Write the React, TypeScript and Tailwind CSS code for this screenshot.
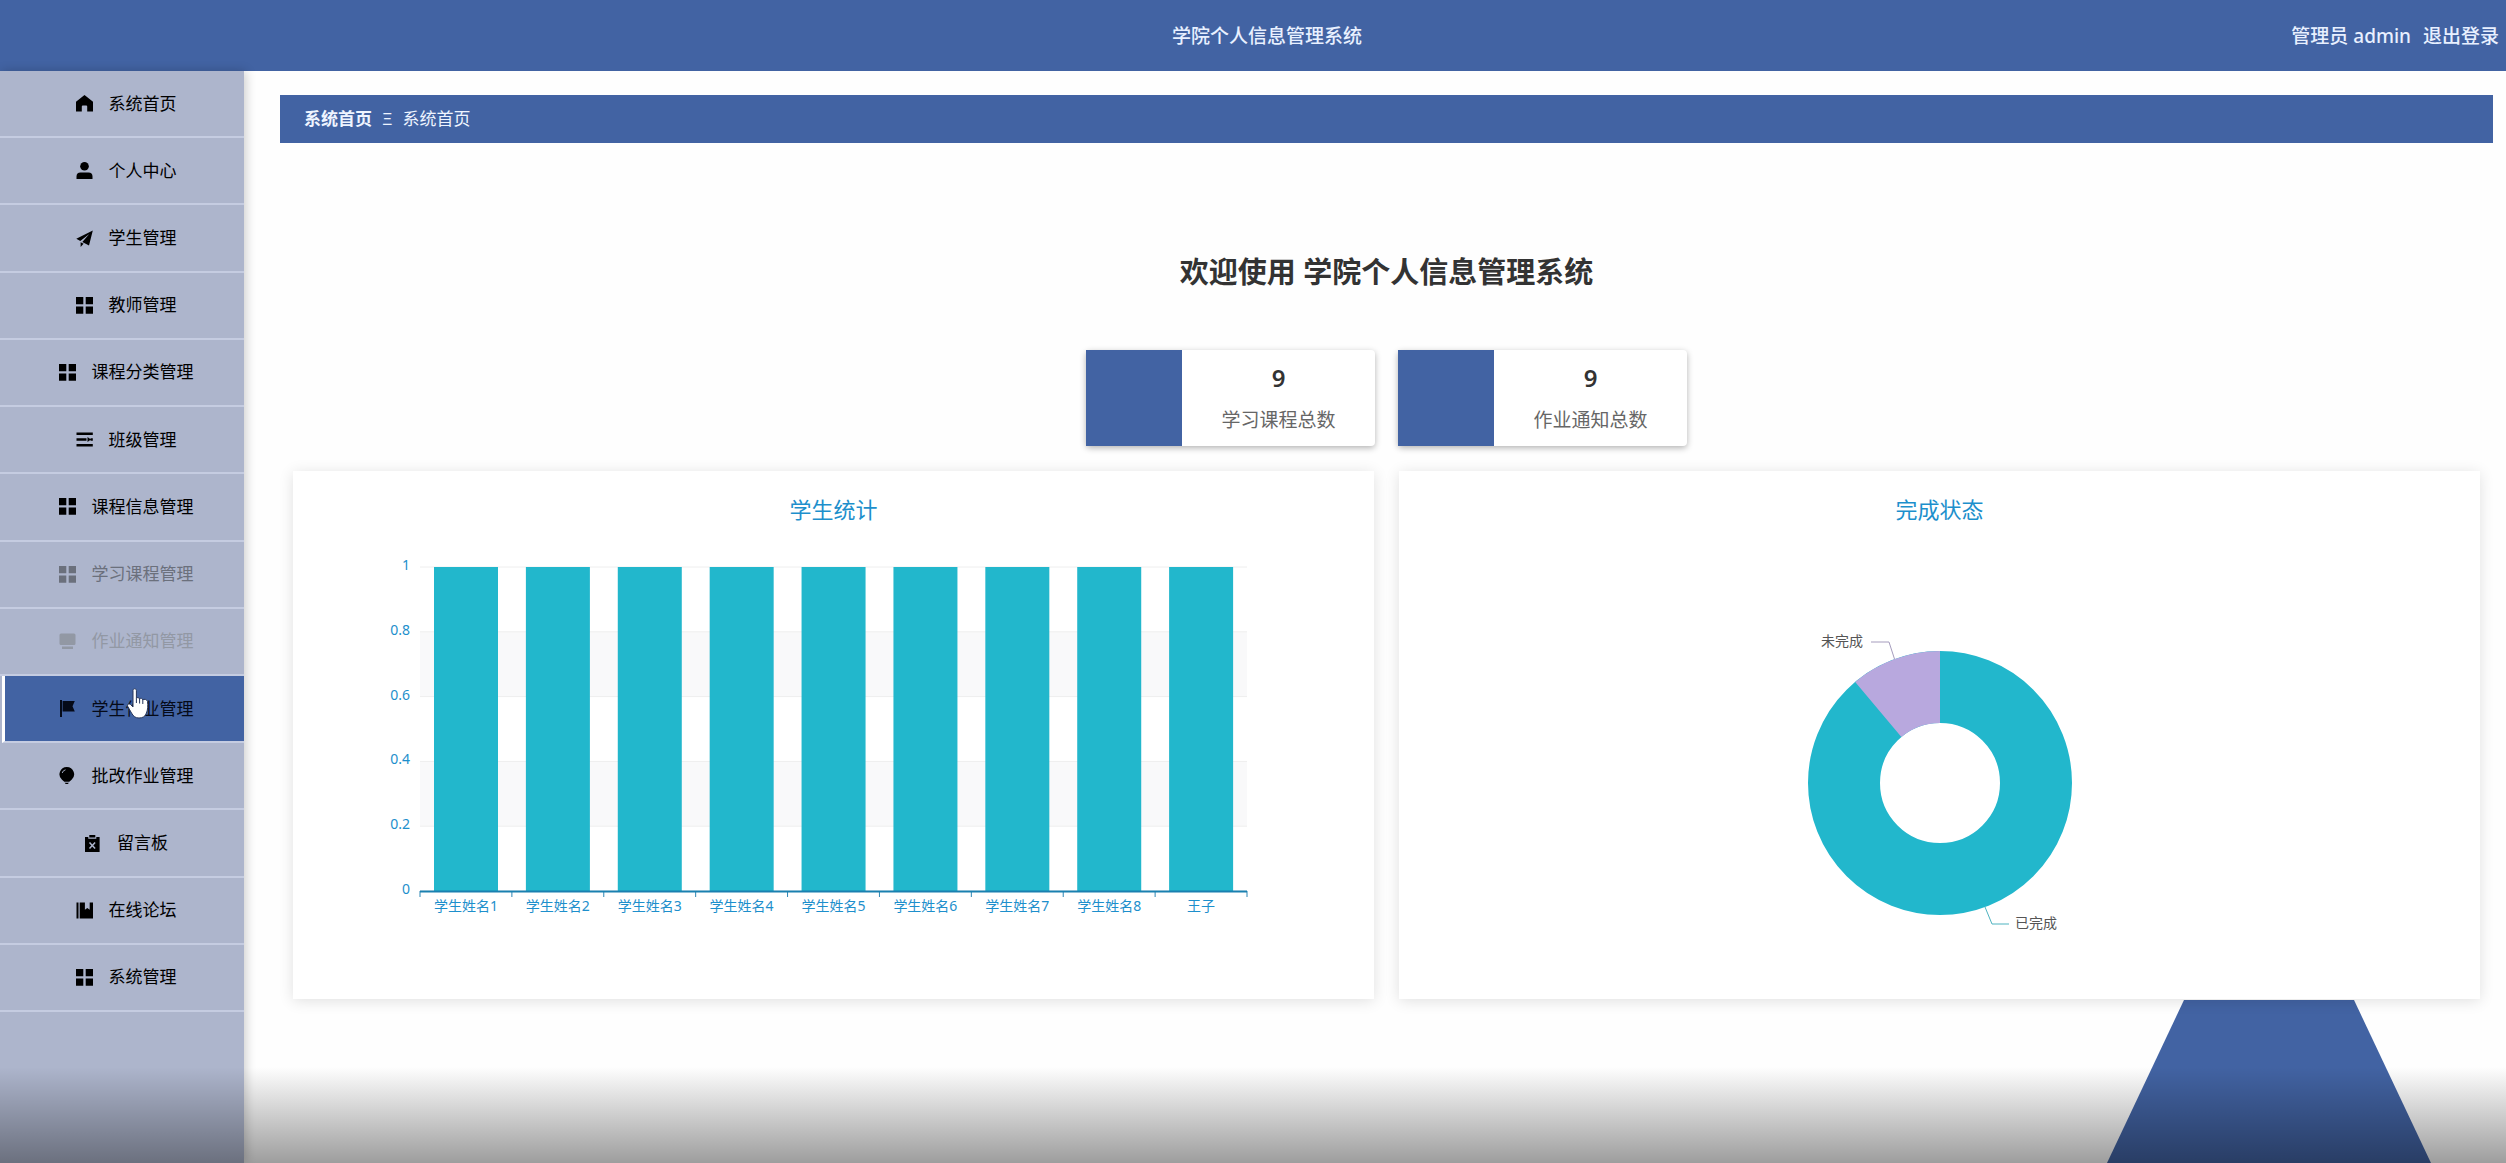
import type { ReactNode } from "react";

const FONT = "font-['Noto_Sans','Noto_Sans_CJK_SC',sans-serif]";

function Icon({ children }: { children: ReactNode }) {
  return (
    <svg viewBox="0 0 17 17" className="size-[17px] shrink-0" fill="currentColor" aria-hidden="true">
      {children}
    </svg>
  );
}

const home = (
  <Icon>
    <path d="M8.500 0 17 6.800v9.700h-5.800v-5a1 1 0 0 0-1-1H6.800a1 1 0 0 0-1 1v5H0V6.800z" />
  </Icon>
);
const user = (
  <Icon>
    <circle cx="8.500" cy="4.300" r="4.300" />
    <path d="M.500 17v-2.500a4 4 0 0 1 4-4h8a4 4 0 0 1 4 4V17z" />
  </Icon>
);
const plane = (
  <Icon>
    <path d="M16.800.500.300 8.800l4 2.200L13.300 4 6.300 12l6.700 3.400z" />
    <path d="M4.600 12.200V17l3-3.200z" />
  </Icon>
);
const grid = (
  <Icon>
    <path d="M0 0h7.300v7.300H0zM9.700 0H17v7.300H9.700zM0 9.500h7.300v7.300H0zM9.700 9.500H17v7.300H9.700z" />
  </Icon>
);
const lines = (
  <Icon>
    <path d="M.500 1.500h16.300v2.600H.500zM.500 7.200h10v2.600H.500zM.500 13h16.300v2.600H.500zM11.500 6l3.400 2.500-3.400 2.500zM14.500 7.200h2.300v2.600h-2.300z" />
  </Icon>
);
const monitor = (
  <Icon>
    <path d="M2 .5h13A1.500 1.500 0 0 1 16.500 2v8.500A1.500 1.500 0 0 1 15 12H2a1.500 1.500 0 0 1-1.500-1.500V2A1.500 1.500 0 0 1 2 .5zM3 13.500h11V16H3z" />
  </Icon>
);
const flag = (
  <Icon>
    <path d="M1 0h2v17H1zM3.600 1h12.200l-2.300 5.200 2.300 5.300H3.600z" />
  </Icon>
);
const bulb = (
  <Icon>
    <path d="M7.800 0a7.300 7.300 0 0 1 4.800 12.800L10.300 14.800H5.300L3 12.800A7.300 7.300 0 0 1 7.800 0z" />
    <path d="M5.700 15.700h4.200l-1 1.300H6.700z" />
    <path d="M3.200 6A4.300 4.300 0 0 1 6.500 2.800" fill="none" stroke="#adb5cc" strokeWidth="0.900" />
  </Icon>
);
const clipboard = (
  <Icon>
    <path d="M1 2h3.300v1.800h8V2h3.300v15H1zM5.300 0h6v2.600h-6z" />
    <path d="m5.500 7.500 5.600 6m0-6-5.600 6" stroke="#adb5cc" strokeWidth="1.500" />
  </Icon>
);
const book = (
  <Icon>
    <path d="M.5.500h2v16h-2zM3.700.500h5.200v7.200l2.400-1.700 2.400 1.700V.500H17v16H3.700z" />
  </Icon>
);

const MENU: { label: string; icon: ReactNode; tone: string }[] = [
  { label: "系统首页", icon: home, tone: "text-black" },
  { label: "个人中心", icon: user, tone: "text-black" },
  { label: "学生管理", icon: plane, tone: "text-black" },
  { label: "教师管理", icon: grid, tone: "text-black" },
  { label: "课程分类管理", icon: grid, tone: "text-black" },
  { label: "班级管理", icon: lines, tone: "text-black" },
  { label: "课程信息管理", icon: grid, tone: "text-black" },
  { label: "学习课程管理", icon: grid, tone: "text-[#6b707c]" },
  { label: "作业通知管理", icon: monitor, tone: "text-[#9298a4]" },
  { label: "学生作业管理", icon: flag, tone: "active" },
  { label: "批改作业管理", icon: bulb, tone: "text-black" },
  { label: "留言板", icon: clipboard, tone: "text-black" },
  { label: "在线论坛", icon: book, tone: "text-black" },
  { label: "系统管理", icon: grid, tone: "text-black" },
];

function Sidebar() {
  return (
    <aside className="relative z-10 w-[244px] shrink-0 bg-[#adb5cc] shadow-[2px_0_10px_rgba(0,0,0,0.2)]">
      <nav className="flex h-[941px] flex-col">
        {MENU.map(({ label, icon, tone }) => (
          <a
            key={label}
            href="#"
            className={
              "flex flex-1 items-center justify-center gap-4 border-b-2 border-b-[#c5cce1] text-[17px] leading-6 " +
              (tone === "active"
                ? "ml-0.5 border-l-[3px] border-l-white bg-[#4263a3] pl-[3px] text-[#050a18]"
                : "pl-2 " + tone)
            }
          >
            {icon}
            <span>{label}</span>
          </a>
        ))}
      </nav>
    </aside>
  );
}

function Pointer() {
  return (
    <svg viewBox="0 0 22 31" className="pointer-events-none absolute left-[127px] top-[688px] z-20 h-[31px] w-[22px]" aria-hidden="true">
      <path
        d="M6 2.500c0-2.300 3.400-2.300 3.400 0v8c.5-1.500 3-1.200 3.200.6.700-1.300 3-.9 3.200.8.900-1.100 4.500-.7 4.700 1.600.5 4 .5 8.500-1.500 12.500-1 2.500-3.500 4-7 4s-5.500-1.500-7.500-5L.8 18.500c-1-1.900 1-3.400 2.700-2L6 19z"
        fill="white"
        stroke="#26365c"
        strokeWidth="1"
      />
      <path d="M9.400 10.500V15m3.200-4v4.500m3.200-3.700V16" stroke="#26365c" strokeWidth="1" />
    </svg>
  );
}

function Stat({ value, label }: { value: string; label: string }) {
  return (
    <div className="flex h-24 w-[289px] rounded bg-white shadow-[0_2px_6px_rgba(0,0,0,0.3)]">
      <div className="w-24 bg-[#4263a3]" />
      <div className="flex flex-1 flex-col items-center justify-center gap-3 text-center">
        <strong className="text-2xl font-semibold leading-8 text-[#333]">{value}</strong>
        <span className="text-[19px] leading-7 text-[#666]">{label}</span>
      </div>
    </div>
  );
}

function ChartCard({ title, children }: { title: string; children: ReactNode }) {
  return (
    <section className="min-w-0 flex-1 bg-white pt-[22px] shadow-[0_2px_14px_rgba(0,0,0,0.12)]">
      <h2 className="mb-0.5 text-center text-[22px] leading-8 text-[#1d8fcc]">{title}</h2>
      {children}
    </section>
  );
}

const STUDENTS = ["学生姓名1", "学生姓名2", "学生姓名3", "学生姓名4", "学生姓名5", "学生姓名6", "学生姓名7", "学生姓名8", "王子"];
const TICKS = ["0", "0.2", "0.4", "0.6", "0.8", "1"];
const LEFT = 127;
const RIGHT = 954;
const TOP = 40;
const BOTTOM = 364;
const STEP = (RIGHT - LEFT) / STUDENTS.length;
const BAND = (BOTTOM - TOP) / 5;

function BarChart() {
  return (
    <svg viewBox="0 0 1081 472" className="block w-full text-[14px]" role="img" aria-label="学生统计">
      <rect x={LEFT} y={TOP + BAND} width={RIGHT - LEFT} height={BAND} fill="#f9f9fa" />
      <rect x={LEFT} y={TOP + BAND * 3} width={RIGHT - LEFT} height={BAND} fill="#f9f9fa" />
      {TICKS.map((t, i) => (
        <g key={t}>
          <line x1={LEFT} x2={RIGHT} y1={BOTTOM - BAND * i} y2={BOTTOM - BAND * i} stroke="#eeeeee" />
          <text x="117" y={BOTTOM - BAND * i + 3} textAnchor="end" fill="#1d8fcc">
            {t}
          </text>
        </g>
      ))}
      {STUDENTS.map((s, i) => (
        <g key={s}>
          <rect x={LEFT + STEP * i + 14} y={TOP} width="64" height={BOTTOM - TOP} fill="#22b7cc" />
          <text x={LEFT + STEP * (i + 0.5)} y="384" textAnchor="middle" fill="#1d8fcc">
            {s}
          </text>
        </g>
      ))}
      {[...STUDENTS, ""].map((s, i) => (
        <line key={s} x1={LEFT + STEP * i} x2={LEFT + STEP * i} y1={BOTTOM} y2={BOTTOM + 6} stroke="#2c86b4" />
      ))}
      <line x1={LEFT} x2={RIGHT} y1={BOTTOM + 0.5} y2={BOTTOM + 0.5} stroke="#1a80b0" strokeWidth="2" />
    </svg>
  );
}

function Donut() {
  return (
    <svg viewBox="0 0 1081 472" className="block w-full text-[14px]" role="img" aria-label="完成状态">
      <circle cx="541" cy="256" r="96" fill="none" stroke="#22b7cc" strokeWidth="72" />
      <path d="M541 124A132 132 0 0 0 456.200 154.900L502.400 210A60 60 0 0 1 541 196z" fill="#b8a8de" />
      <path d="M495.500 132 490 115H472" fill="none" stroke="#a59cbd" />
      <path d="M586 380 593 397H610" fill="none" stroke="#4fb3c0" />
      <text x="422" y="119" fill="#555">
        未完成
      </text>
      <text x="616" y="401" fill="#555">
        已完成
      </text>
    </svg>
  );
}

export default function App() {
  return (
    <div className={"relative flex min-h-screen flex-col overflow-hidden bg-[#fefefe] " + FONT}>
      <header className="grid h-[71px] grid-cols-3 items-center bg-[#4263a3] pl-7 text-[19px] leading-7 text-white">
        <h1 className="col-start-2 text-center font-medium text-[#e8f0ff]">学院个人信息管理系统</h1>
        <div className="flex justify-end gap-3 pr-[7px] font-medium text-[#e8f0ff]">
          <span>管理员 admin</span>
          <a href="#">退出登录</a>
        </div>
      </header>

      <div className="flex flex-1">
        <Sidebar />
        <main className="relative min-w-0 flex-1 pl-9 pr-[13px] pt-6">
          <div
            aria-hidden="true"
            className="absolute bottom-0 right-[75px] h-[163px] w-[324px] bg-[#4263a3] [clip-path:polygon(77px_0,247px_0,100%_100%,0_100%)]"
          />
          <nav aria-label="面包屑" className="flex h-12 items-center gap-2.5 bg-[#4263a3] px-6 text-[17px] leading-6 text-[#eef4ff]">
            <a href="#" className="font-bold">
              系统首页
            </a>
            <span>Ξ</span>
            <span>系统首页</span>
          </nav>
          <h2 className="mt-[109px] text-center text-[29px] font-bold leading-10 text-[#333]">欢迎使用 学院个人信息管理系统</h2>
          <div className="mt-[58px] flex justify-center gap-[23px]">
            <Stat value="9" label="学习课程总数" />
            <Stat value="9" label="作业通知总数" />
          </div>
          <div className="relative mt-[25px] flex gap-[25px] px-[13px]">
            <ChartCard title="学生统计">
              <BarChart />
            </ChartCard>
            <ChartCard title="完成状态">
              <Donut />
            </ChartCard>
          </div>
        </main>
      </div>

      <Pointer />
      <div className="pointer-events-none absolute inset-x-0 bottom-0 z-30 h-24 bg-linear-to-b from-transparent to-black/38" />
    </div>
  );
}
